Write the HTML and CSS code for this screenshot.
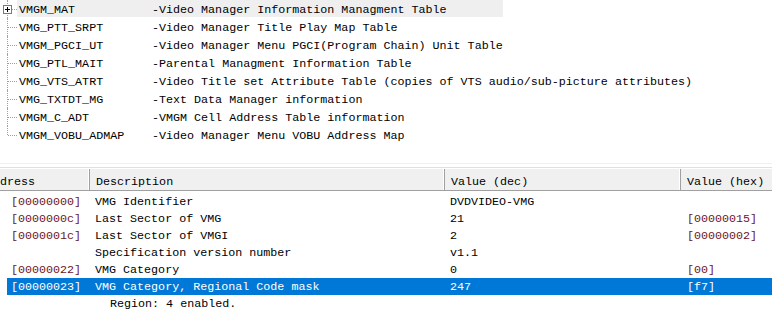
FILE: index.html
```html
<!DOCTYPE html>
<html>
<head>
<meta charset="utf-8">
<link rel="stylesheet" href="styles.css">
</head>
<body>
<div class="app">
  <div class="tree">
    <div class="node hot">
      <span class="plus"></span>
      <span class="label"><span class="name">VMGM_MAT</span><span class="desc">-Video Manager Information Managment Table</span></span>
    </div>
    <div class="node"><span class="label"><span class="name">VMG_PTT_SRPT</span><span class="desc">-Video Manager Title Play Map Table</span></span></div>
    <div class="node"><span class="label"><span class="name">VMGM_PGCI_UT</span><span class="desc">-Video Manager Menu PGCI(Program Chain) Unit Table</span></span></div>
    <div class="node"><span class="label"><span class="name">VMG_PTL_MAIT</span><span class="desc">-Parental Managment Information Table</span></span></div>
    <div class="node"><span class="label"><span class="name">VMG_VTS_ATRT</span><span class="desc">-Video Title set Attribute Table (copies of VTS audio/sub-picture attributes)</span></span></div>
    <div class="node"><span class="label"><span class="name">VMG_TXTDT_MG</span><span class="desc">-Text Data Manager information</span></span></div>
    <div class="node"><span class="label"><span class="name">VMGM_C_ADT</span><span class="desc">-VMGM Cell Address Table information</span></span></div>
    <div class="node last"><span class="label"><span class="name">VMGM_VOBU_ADMAP</span><span class="desc">-Video Manager Menu VOBU Address Map</span></span></div>
  </div>

  <div class="splitter"></div>

  <div class="list">
    <div class="list-inner">
      <div class="header">
        <div class="hcell c-addr">Address</div>
        <div class="hcell c-desc">Description</div>
        <div class="hcell c-dec">Value (dec)</div>
        <div class="hcell c-hex">Value (hex)</div>
      </div>
      <div class="rows">
        <div class="row"><span class="addr">[00000000]</span><span class="d">VMG Identifier</span><span class="v">DVDVIDEO-VMG</span><span class="h"></span></div>
        <div class="row"><span class="addr">[0000000c]</span><span class="d">Last Sector of VMG</span><span class="v">21</span><span class="h">[00000015]</span></div>
        <div class="row"><span class="addr">[0000001c]</span><span class="d">Last Sector of VMGI</span><span class="v">2</span><span class="h">[00000002]</span></div>
        <div class="row"><span class="addr"></span><span class="d">Specification version number</span><span class="v">v1.1</span><span class="h"></span></div>
        <div class="row"><span class="addr">[00000022]</span><span class="d">VMG Category</span><span class="v">0</span><span class="h">[00]</span></div>
        <div class="row selected"><span class="addr">[00000023]</span><span class="d">VMG Category, Regional Code mask</span><span class="v">247</span><span class="h">[f7]</span></div>
        <div class="row child"><span class="addr"></span><span class="d">Region: 4 enabled.</span><span class="v"></span><span class="h"></span></div>
      </div>
    </div>
  </div>
</div>
</body>
</html>
```
FILE: styles.css
```css
html, body {
  margin: 0;
  padding: 0;
  background: #ffffff;
  overflow: hidden;
}

.app {
  width: 772px;
  height: 313px;
  overflow: hidden;
  font-family: "Liberation Mono", "Courier New", monospace;
  font-size: 11.7px;
  color: #000000;
}

/* ---------- tree ---------- */
.tree {
  height: 163px;
  display: flex;
  flex-direction: column;
}

.node {
  position: relative;
  height: 18px;
  display: flex;
  align-items: center;
  padding-left: 17px;
}

.node::before {
  content: "";
  position: absolute;
  left: 7px;
  top: 0;
  bottom: 0;
  border-left: 1px dotted #a0a0a0;
}

.node.last::before {
  bottom: 9px;
}

.node::after {
  content: "";
  position: absolute;
  left: 8px;
  top: 9px;
  width: 9px;
  border-top: 1px dotted #a0a0a0;
}

.node.hot::after {
  left: 12px;
  width: 5px;
}

.plus {
  position: absolute;
  left: 3px;
  top: 5px;
  width: 7px;
  height: 7px;
  border: 1px solid #7a7a7a;
  background: #ffffff;
  z-index: 1;
}

.plus::before {
  content: "";
  position: absolute;
  left: 1px;
  top: 3px;
  width: 5px;
  height: 1px;
  background: #000;
}

.plus::after {
  content: "";
  position: absolute;
  left: 3px;
  top: 1px;
  width: 1px;
  height: 5px;
  background: #000;
}

.label {
  display: flex;
  height: 18px;
  align-items: center;
  padding-left: 2px;
  padding-top: 1px;
  box-sizing: border-box;
  white-space: pre;
}

.node.hot .label {
  background: #efefef;
  width: 486px;
  height: 17px;
  align-self: flex-start;
  padding-top: 2px;
}

.name {
  width: 133px;
  flex: none;
}

/* ---------- splitter ---------- */
.splitter {
  height: 3px;
  border-top: 1px solid #f0f0f0;
  border-bottom: 1px solid #e0e0e0;
  background: #ffffff;
}

/* ---------- list ---------- */
.list {
  overflow: hidden;
}

.list-inner {
  margin-left: -19px;
  width: 820px;
}

.header {
  display: grid;
  grid-template-columns: 109px 355px 236px 1fr;
  height: 21px;
  background: #f0f0f0;
  border-top: 1px solid #ffffff;
  border-bottom: 1px solid #a0a0a0;
}

.hcell {
  display: flex;
  align-items: center;
  padding-left: 6px;
  padding-top: 4px;
  box-sizing: border-box;
  white-space: pre;
  border-right: 1px solid #a0a0a0;
  box-shadow: inset -1px 0 0 #ffffff;
}

.c-addr {
  padding-left: 5px;
}

.rows {
  padding-top: 2px;
}

.row {
  display: grid;
  grid-template-columns: 83px 355px 236px 1fr;
  margin-left: 26px;
  height: 17px;
  align-items: center;
  white-space: pre;
  padding-top: 1px;
  box-sizing: border-box;
}

.row .addr {
  padding-left: 4px;
  color: #6e1426;
}

.row .d {
  padding-left: 5px;
}

.row .v {
  padding-left: 5px;
}

.row .h {
  padding-left: 6px;
  color: #6e1426;
}

.row.selected {
  background: #0078d7;
  color: #ffffff;
}

.row.selected .addr,
.row.selected .h {
  color: #ffffff;
}

.row.child .d {
  padding-left: 20px;
}
```
